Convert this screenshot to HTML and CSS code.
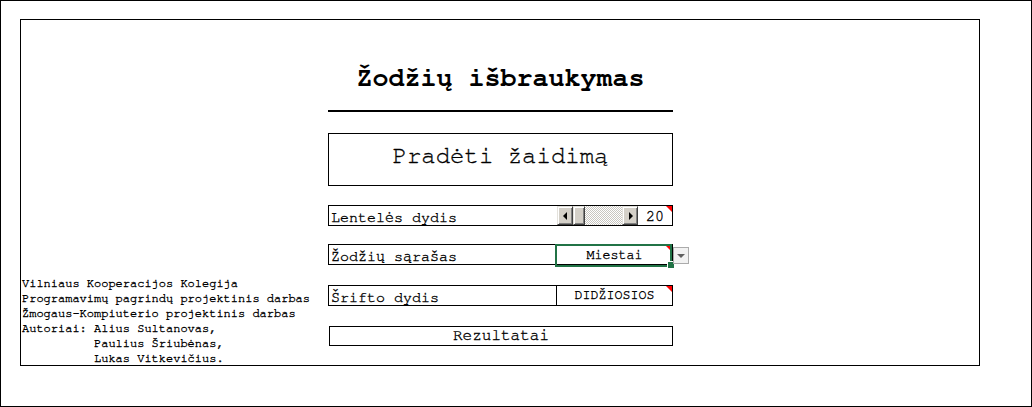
FILE: index.html
```html
<!DOCTYPE html>
<html lang="lt">
<head>
<meta charset="utf-8">
<title>Žodžių išbraukymas</title>
<link rel="stylesheet" href="styles.css">
</head>
<body>
<div class="screen">
  <div class="sheet">
    <div class="credits">Vilniaus Kooperacijos Kolegija
Programavimų pagrindų projektinis darbas
Žmogaus-Kompiuterio projektinis darbas
Autoriai: Alius Sultanovas,
          Paulius Šriubėnas,
          Lukas Vitkevičius.</div>
    <div class="menu">
      <h1 class="title">Žodžių išbraukymas</h1>
      <button class="start" type="button">Pradėti žaidimą</button>
      <div class="row">
        <span class="label">Lentelės dydis</span>
        <div class="scroll">
          <span class="sbtn"><span class="arr-left"></span></span>
          <span class="thumb"></span>
          <span class="track"></span>
          <span class="sbtn"><span class="arr-right"></span></span>
        </div>
        <span class="num flag">20</span>
      </div>
      <div class="row row-tall">
        <span class="label">Žodžių sąrašas</span>
        <span class="value active">Miestai<span class="sel"></span><span class="drop"><span class="arr-down"></span></span></span>
      </div>
      <div class="row">
        <span class="label">Šrifto dydis</span>
        <span class="value flag">DIDŽIOSIOS</span>
      </div>
      <div class="results">Rezultatai</div>
    </div>
  </div>
</div>
</body>
</html>
```

FILE: styles.css
```css
* { box-sizing: border-box; }
html, body { margin: 0; padding: 0; background: #fff; }
body {
  font-family: "Nimbus Mono PS", "Nimbus Mono L", "Nimbus Mono", "FreeMono", "Courier", "Liberation Mono", "Courier New", monospace;
  color: #000;
  -webkit-text-stroke: 0.35px #000;
}

.screen {
  width: 1032px;
  height: 407px;
  border: 1px solid #000;
  padding: 18px 0 0 19px;
}

.sheet {
  width: 960px;
  height: 347px;
  border: 1px solid #000;
  display: grid;
  grid-template-columns: 307px 345px 1fr;
}

.credits {
  align-self: end;
  margin-bottom: -1px;
  padding-left: 1px;
  font-size: 12px;
  line-height: 15px;
  white-space: pre;
}

.menu { display: flex; flex-direction: column; }

.title {
  margin: 43px 0 0;
  font-size: 26.67px;
  line-height: 30px;
  font-weight: bold;
  text-align: center;
  padding-bottom: 17px;
  border-bottom: 2px solid #000;
  -webkit-text-stroke: 0;
}

.start {
  display: block;
  width: 100%;
  margin: 21px 0 0;
  padding: 9px 0 15px;
  border: 1px solid #000;
  border-radius: 0;
  background: #fff;
  color: #000;
  font-family: inherit;
  font-size: 24px;
  line-height: 27px;
  text-align: center;
  appearance: none;
  -webkit-text-stroke: 0.3px #000;
}

.row {
  margin-top: 19px;
  height: 21px;
  border: 1px solid #000;
  display: flex;
}
.row-tall { margin-top: 18px; }
.row + .row-tall + .row { margin-top: 20px; }

.label {
  width: 227px;
  flex: 0 0 227px;
  font-size: 15px;
  line-height: 17px;
  padding: 3px 0 0 2px;
}

.scroll {
  display: flex;
  margin-left: 1px;
  width: 81px;
  height: 19px;
}
.sbtn, .thumb {
  display: flex;
  align-items: center;
  justify-content: center;
  background: #d4d0c8;
  border: 1px solid;
  border-color: #e4e2dc #404040 #404040 #e4e2dc;
  box-shadow: inset 1px 1px #fff, inset -1px -1px #808080;
}
.sbtn { width: 16px; }
.thumb { width: 12px; }
.track {
  flex: 1;
  background-color: #fff;
  background-image: conic-gradient(#c8c6c0 25%, #fff 0 50%, #c8c6c0 0 75%, #fff 0);
  background-size: 2px 2px;
}
.arr-left, .arr-right { width: 0; height: 0; border-top: 4px solid transparent; border-bottom: 4px solid transparent; }
.arr-left { border-right: 4px solid #000; margin-right: 1px; }
.arr-right { border-left: 4px solid #000; margin-left: 1px; }

.num {
  flex: 1;
  position: relative;
  text-align: center;
  font-size: 15px;
  line-height: 17px;
  padding-top: 2px;
}

.value {
  flex: 1;
  position: relative;
  border-left: 1px solid #000;
  text-align: center;
  font-size: 13.33px;
  line-height: 15px;
  padding-top: 2px;
}

.flag::after {
  content: "";
  position: absolute;
  top: 0;
  right: 0;
  border-top: 6px solid #f00;
  border-left: 6px solid transparent;
}

.active { padding-top: 3px; }
.active::after {
  content: "";
  position: absolute;
  top: 1px;
  right: 2px;
  border-top: 4px solid #f00;
  border-left: 4px solid transparent;
  z-index: 2;
}
.sel {
  position: absolute;
  left: -2px;
  top: -1px;
  right: 0;
  bottom: -3px;
  border: 2px solid #217346;
}
.sel::after {
  content: "";
  position: absolute;
  right: -5px;
  bottom: -4px;
  width: 6px;
  height: 6px;
  background: #217346;
  border: 1px solid #fff;
}
.drop {
  position: absolute;
  left: calc(100% + 1px);
  top: 2px;
  width: 16px;
  height: 17px;
  border: 1px solid #ababab;
  background: #f2f2f2;
  display: flex;
  align-items: center;
  justify-content: center;
}
.arr-down {
  width: 0;
  height: 0;
  border-top: 4px solid #606060;
  border-left: 4px solid transparent;
  border-right: 4px solid transparent;
  margin-top: 1px;
}

.results {
  margin: 20px 0 0 1px;
  height: 20px;
  border: 1px solid #000;
  text-align: center;
  font-size: 16px;
  line-height: 17px;
}
```
